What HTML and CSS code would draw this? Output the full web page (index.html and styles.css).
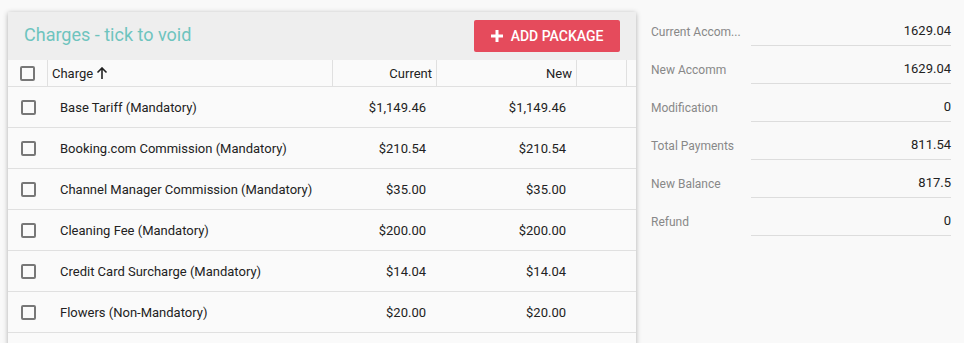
FILE: index.html
```html
<!DOCTYPE html>
<html lang="en">
<head>
  <meta charset="UTF-8" />
  <title>Charges</title>
  <link rel="stylesheet" href="styles.css">
</head>
<body>

  <div class="page">
    <div class="card">
      <div class="card-head">
        <span class="title">Charges - tick to void</span>
        <button class="add-btn">
          <svg width="12" height="12" viewBox="0 0 12 12"><path d="M4.5 0h3v4.5H12v3H7.5V12h-3V7.5H0v-3h4.5z" fill="#fff"/></svg>
          ADD PACKAGE
        </button>
      </div>

      <div class="grid head-row">
        <div class="cell chk"><span class="box"></span></div>
        <div class="cell name">Charge
          <svg width="12" height="12" viewBox="0 0 12 12"><path d="M6 1v11M1.5 5.5L6 1l4.5 4.5" stroke="#222" stroke-width="1.6" fill="none"/></svg>
        </div>
        <div class="cell num">Current</div>
        <div class="cell num">New</div>
        <div class="cell"></div>
        <div class="cell last"></div>
      </div>

      <div id="rows"></div>
    </div>

    <div class="summary">
      <div class="sum-row"><span class="label" title="Current Accommodation">Current Accom...</span><span class="value">1629.04</span></div>
      <div class="sum-row"><span class="label">New Accomm</span><span class="value">1629.04</span></div>
      <div class="sum-row"><span class="label">Modification</span><span class="value">0</span></div>
      <div class="sum-row"><span class="label">Total Payments</span><span class="value">811.54</span></div>
      <div class="sum-row"><span class="label">New Balance</span><span class="value">817.5</span></div>
      <div class="sum-row"><span class="label">Refund</span><span class="value">0</span></div>
    </div>
  </div>

  <script>
    const charges = [
      ["Base Tariff (Mandatory)", "$1,149.46", "$1,149.46"],
      ["Booking.com Commission (Mandatory)", "$210.54", "$210.54"],
      ["Channel Manager Commission (Mandatory)", "$35.00", "$35.00"],
      ["Cleaning Fee (Mandatory)", "$200.00", "$200.00"],
      ["Credit Card Surcharge (Mandatory)", "$14.04", "$14.04"],
      ["Flowers (Non-Mandatory)", "$20.00", "$20.00"]
    ];
    const rows = document.getElementById("rows");

    charges.forEach(c => {
      const row = document.createElement("div");
      row.className = "grid row";
      row.innerHTML = `
        <div class="cell chk"><span class="box"></span></div>
        <div class="cell name">${c[0]}</div>
        <div class="cell num">${c[1]}</div>
        <div class="cell num">${c[2]}</div>
        <div class="cell"></div>
        <div class="cell"></div>
      `;
      rows.appendChild(row);
    });
  </script>

</body>
</html>
```

FILE: styles.css
```css
body {
  margin: 0;
  background: #f9f9f9;
  font-family: Roboto, "Liberation Sans", sans-serif;
  color: #222;
  overflow: hidden;
}

.page {
  display: flex;
  align-items: flex-start;
  padding: 12px 0 0 8px;
}

.card {
  width: 628px;
  min-height: 340px;
  background: #fafafa;
  box-shadow: 0 1px 5px rgba(0, 0, 0, 0.3);
  flex-shrink: 0;
}

.card-head {
  height: 48px;
  background: #eeeeee;
  display: flex;
  align-items: center;
  justify-content: space-between;
  padding: 0 16px;
}

.title {
  font-size: 18px;
  color: #6ec4be;
  margin-bottom: 4px;
}

.add-btn {
  display: flex;
  align-items: center;
  gap: 8px;
  height: 32px;
  width: 146px;
  justify-content: center;
  background: #e54b5c;
  color: #fff;
  border: none;
  border-radius: 2px;
  font-family: inherit;
  font-size: 14px;
  font-weight: 500;
  padding: 0;
}

.grid {
  display: grid;
  grid-template-columns: 40px 285px 104px 140px 50px 9px;
  font-size: 13px;
}

.head-row {
  height: 26px;
  border-bottom: 1px solid #e0e0e0;
}

.head-row .cell {
  border-right: 1px solid #e0e0e0;
  display: flex;
  align-items: center;
}

.head-row .cell.last {
  border-right: none;
}

.head-row .name {
  padding-left: 4px;
  gap: 3px;
}

.head-row .num {
  justify-content: flex-end;
  padding-right: 4px;
}

.row {
  height: 40px;
  border-bottom: 1px solid #e0e0e0;
}

.row .cell {
  display: flex;
  align-items: center;
}

.row .name {
  padding-left: 12px;
}

.row .num {
  justify-content: flex-end;
  padding-right: 11px;
}

.chk {
  justify-content: center;
}

.box {
  width: 11px;
  height: 11px;
  border: 2px solid #777;
  border-radius: 2px;
}

.summary {
  margin-left: 15px;
  margin-top: -4px;
  width: 300px;
}

.sum-row {
  display: flex;
  height: 38px;
  font-size: 12px;
}

.label {
  width: 100px;
  color: #888;
  white-space: nowrap;
  align-self: flex-end;
  padding-bottom: 7px;
}

.value {
  flex: 1;
  font-size: 13px;
  color: #222;
  border-bottom: 1px solid #ddd;
  display: flex;
  align-items: flex-end;
  justify-content: flex-end;
  padding-bottom: 7px;
}
```
